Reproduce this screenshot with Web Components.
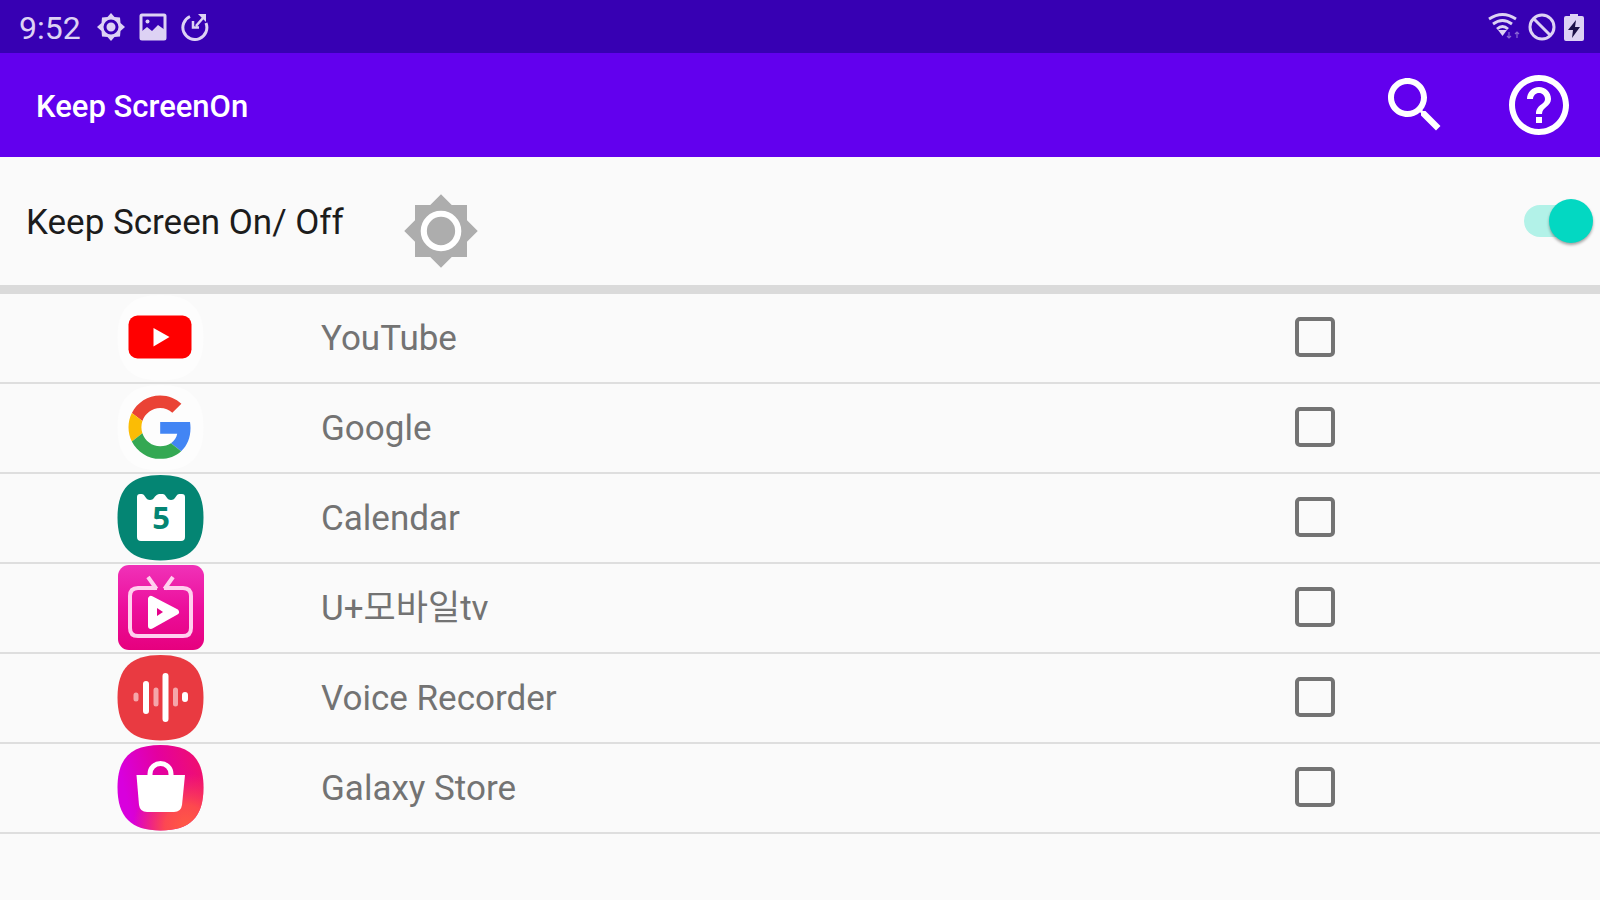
<!DOCTYPE html>
<html lang="en">
<head>
<meta charset="utf-8">
<meta name="viewport" content="width=device-width, initial-scale=1">
<title>Keep ScreenOn</title>
<style>
  body {
    margin: 0;
    min-height: 100vh;
    background: #fafafa;
    font-family: Roboto, 'Noto Sans CJK KR', sans-serif;
  }
</style>
</head>
<body>
<keep-screen-app></keep-screen-app>

<script>
// ============ APP ICONS (88 x 88) ============

const SQUIRCLE = 'M44.500 1C74 1 87.500 14 87.500 43.500S74 86.500 44.500 86.500 1.500 73 1.500 43.500 15 1 44.500 1z';

const APP_ICONS = {
  youtube: `
    <path d="${SQUIRCLE}" fill="#fdfdfd"/>
    <rect x="12.500" y="21.500" width="63" height="43" rx="9" fill="#f00"/>
    <path d="M37.500 34l16 9-16 9.500z" fill="#fff"/>`,
  google: `
    <path d="${SQUIRCLE}" fill="#fdfdfd"/>
    <g transform="translate(12.500 11.500) scale(1.320)">
      <path fill="#ea4335" d="M24 9.500c3.540 0 6.710 1.220 9.210 3.600l6.850-6.850C35.900 2.380 30.470 0 24 0 14.620 0 6.510 5.380 2.560 13.220l7.980 6.190C12.430 13.720 17.740 9.500 24 9.500z"/>
      <path fill="#4285f4" d="M46.980 24.550c0-1.570-.15-3.090-.38-4.550H24v9.020h12.940c-.58 2.960-2.260 5.480-4.780 7.180l7.730 6c4.510-4.180 7.090-10.360 7.090-17.650z"/>
      <path fill="#fbbc05" d="M10.530 28.590c-.48-1.450-.76-2.990-.76-4.590s.27-3.140.76-4.590l-7.980-6.190C.92 16.460 0 20.120 0 24c0 3.880.92 7.540 2.560 10.780l7.970-6.190z"/>
      <path fill="#34a853" d="M24 48c6.480 0 11.930-2.130 15.890-5.810l-7.730-6c-2.150 1.450-4.920 2.300-8.160 2.300-6.260 0-11.570-4.220-13.470-9.910l-7.980 6.190C6.510 42.620 14.620 48 24 48z"/>
    </g>`,
  calendar: `
    <path d="${SQUIRCLE}" fill="#048573"/>
    <path d="M21 23q0-3 3-3h2q2 0 3 2.500Q31 26 34 26t5-3.500Q41 20 43 20h4q2 0 3 2.500Q52 26 55 26t5-3.500Q61 20 63 20h3q3 0 3 3v40q0 4-4 4H25q-4 0-4-4z" fill="#fff"/>
    <text x="45" y="55" text-anchor="middle" font-family="Open Sans, sans-serif" font-size="31" font-weight="700" fill="#048573">5</text>`,
  tv: `
    <defs><linearGradient id="tv" x1="0" y1="0" x2="0" y2="1">
      <stop offset="0" stop-color="#f032b8"/><stop offset=".5" stop-color="#ec0f9c"/><stop offset="1" stop-color="#e6007e"/>
    </linearGradient></defs>
    <rect x="2" y="1" width="86" height="85" rx="11" fill="url(#tv)"/>
    <g fill="none" stroke="#ffd0ee" stroke-width="4">
      <path d="M41 24H22q-8 0-8 8v32q0 8 8 8h45q8 0 8-8V32q0-8-8-8H48"/>
      <path d="M32 13l8.500 12M57 13l-8.500 12"/>
    </g>
    <path d="M35 35v27l25-14z" fill="#fff" stroke="#fff" stroke-width="6" stroke-linejoin="round"/>
    <path d="M41 44v8l6-4z" fill="#e5008a"/>`,
  recorder: `
    <path d="${SQUIRCLE}" fill="#e93a41"/>
    <g stroke="#fff" stroke-width="6" stroke-linecap="round">
      <path d="M30 30v27M49.500 22v43M69 41v4"/>
      <path d="M20 41v4M40 36v14M59.500 36v14" stroke-width="5" opacity=".55"/>
    </g>`,
  store: `
    <defs>
      <linearGradient id="base" x1="0" y1=".4" x2="1" y2=".2">
        <stop offset=".05" stop-color="#d800dd"/><stop offset=".5" stop-color="#e4009f"/><stop offset="1" stop-color="#f0106c"/>
      </linearGradient>
      <radialGradient id="warm" cx=".8" cy=".95" r=".62">
        <stop offset="0" stop-color="#ff5a45"/><stop offset=".4" stop-color="#ff5048" stop-opacity=".9"/><stop offset="1" stop-color="#ff4050" stop-opacity="0"/>
      </radialGradient>
    </defs>
    <path d="${SQUIRCLE}" fill="url(#base)"/>
    <path d="${SQUIRCLE}" fill="url(#warm)"/>
    <path d="M34 33v-3a10.500 10.500 0 0 1 21 0v3" fill="none" stroke="#fff" stroke-width="5"/>
    <path d="M20.500 31H69l-3 30q-1 7-8 7H31q-7 0-8-7z" fill="#fff"/>`
};

const APPS = [
  { name: 'YouTube', icon: 'youtube' },
  { name: 'Google', icon: 'google' },
  { name: 'Calendar', icon: 'calendar' },
  { name: 'U+모바일tv', icon: 'tv' },
  { name: 'Voice Recorder', icon: 'recorder' },
  { name: 'Galaxy Store', icon: 'store' }
];

const SUN_PATH = 'M20 8.690V4h-4.690L12 .69 8.690 4H4v4.690L.69 12 4 15.310V20h4.690L12 23.310 15.310 20H20v-4.690L23.310 12 20 8.690z';

// ============ STATUS BAR ============

const templateStatus = document.createElement('template');
templateStatus.innerHTML = `
<style>
  :host {
    display: flex;
    align-items: center;
    justify-content: space-between;
    height: 53px;
    padding: 0 16px 0 19px;
    background: #3700b3;
    color: #ddd2f4;
    font-size: 32px;
  }
  .group { display: flex; align-items: center; gap: 14px; }
  .time { margin: 2px 2px 0 0; }
  .system { gap: 6px; }
  svg { display: block; width: 28px; height: 28px; }
  .system .wifi { width: 34px; }
  .system .battery { width: 20px; margin-left: 2px; }
</style>
<div class="group">
  <span class="time"><slot></slot></span>
  <svg viewBox="0 0 28 28">
    <path d="M14 0l3.500 4L23 4.500 23.500 10 28 14l-4.500 4-.5 5.500-5.500.5L14 28l-3.500-4-5.500-.5L4.500 18 0 14l4.500-4L5 4.500 10.500 4z" fill="currentColor"/>
    <circle cx="14" cy="14" r="6" fill="none" stroke="#3700b3" stroke-width="3"/>
  </svg>
  <svg viewBox="0 0 28 28">
    <rect x="2" y="2" width="24" height="24" rx="1" fill="none" stroke="currentColor" stroke-width="3"/>
    <path d="M2 19l6-5 5 4 6-6 7 5v9H2z" fill="currentColor"/>
    <circle cx="8.500" cy="8.500" r="2" fill="currentColor"/>
  </svg>
  <svg viewBox="0 0 28 28" fill="none" stroke="currentColor" stroke-width="3">
    <path d="M9 3.500A12 12 0 1 0 25 10"/>
    <path d="M12 8v6.500h6M15 13l7-8" stroke-width="2.500"/>
    <path d="M17 1h8v8z" fill="currentColor" stroke="none"/>
  </svg>
</div>
<div class="group system">
  <svg class="wifi" viewBox="0 0 34 28" fill="none" stroke="currentColor" stroke-width="2.800">
    <path d="M1 6Q14.500-3 28 6M5 11q9.500-7 19 0M9 16q5.500-5 11 0"/>
    <path d="M10 17h9l-4.500 6z" fill="currentColor" stroke="none"/>
    <path d="M21 19v6m-2-2l2 2 2-2M29 25v-6m-2 2l2-2 2 2" stroke-width="1.200" opacity=".5"/>
  </svg>
  <svg viewBox="0 0 28 28" fill="none" stroke="currentColor" stroke-width="3">
    <circle cx="14" cy="14" r="12"/>
    <path d="M5 5l18 18"/>
  </svg>
  <svg class="battery" viewBox="0 0 20 28">
    <path d="M6 1h8v2h4q2 0 2 2v21q0 2-2 2H2q-2 0-2-2V5q0-2 2-2h4z" fill="currentColor"/>
    <path d="M12 7L4 17h5l-1 8 8-11h-5z" fill="#1c1048"/>
  </svg>
</div>
`;

class StatusBar extends HTMLElement {
  constructor() {
    super();
    this.attachShadow({ mode: 'open' });
    this.shadowRoot.appendChild(templateStatus.content.cloneNode(true));
  }
}

// ============ APP BAR ============

const templateAppBar = document.createElement('template');
templateAppBar.innerHTML = `
<style>
  :host {
    display: flex;
    align-items: center;
    height: 104px;
    padding: 0 25px 0 36px;
    gap: 52px;
    background: #6200ee;
    color: #fff;
  }
  h1 {
    flex: 1;
    margin: 2px 0 0;
    font-size: 31px;
    font-weight: 500;
  }
  button {
    padding: 0;
    border: 0;
    background: none;
    color: inherit;
    cursor: pointer;
  }
  svg { display: block; width: 72px; height: 72px; fill: currentColor; }
</style>
<h1><slot></slot></h1>
<button type="button" aria-label="Search">
  <svg viewBox="0 0 24 24"><path d="M15.500 14h-.79l-.28-.27C15.410 12.590 16 11.110 16 9.500 16 5.910 13.090 3 9.500 3S3 5.910 3 9.500 5.910 16 9.500 16c1.610 0 3.090-.59 4.230-1.570l.27.28v.79l5 4.990L20.490 19l-4.990-5zm-6 0C7.010 14 5 11.990 5 9.500S7.010 5 9.500 5 14 7.010 14 9.500 11.990 14 9.500 14z"/></svg>
</button>
<button type="button" aria-label="Help">
  <svg viewBox="0 0 24 24"><path d="M11 18h2v-2h-2v2zm1-16C6.480 2 2 6.480 2 12s4.480 10 10 10 10-4.480 10-10S17.520 2 12 2zm0 18c-4.410 0-8-3.590-8-8s3.590-8 8-8 8 3.590 8 8-3.590 8-8 8zm0-14c-2.210 0-4 1.790-4 4h2c0-1.100.9-2 2-2s2 .9 2 2c0 2-3 1.750-3 5h2c0-2.250 3-2.500 3-5 0-2.210-1.790-4-4-4z"/></svg>
</button>
`;

class AppBar extends HTMLElement {
  constructor() {
    super();
    this.attachShadow({ mode: 'open' });
    this.shadowRoot.appendChild(templateAppBar.content.cloneNode(true));
  }
}

// ============ MAIN SWITCH ============

const templateSwitch = document.createElement('template');
templateSwitch.innerHTML = `
<style>
  :host {
    display: flex;
    align-items: center;
    height: 128px;
    padding: 0 7px 0 26px;
    border-bottom: 9px solid #dadada;
    color: #1c1c1c;
    font-size: 35px;
  }
  label { padding-top: 2px; }
  svg {
    align-self: flex-end;
    width: 78px;
    height: 78px;
    margin: 0 auto 15px 58px;
  }
  input {
    appearance: none;
    display: grid;
    align-items: center;
    width: 69px;
    height: 44px;
    margin: 0;
    cursor: pointer;
  }
  input::before,
  input::after {
    content: '';
    grid-area: 1 / 1;
  }
  input::before {
    width: 62px;
    height: 32px;
    border-radius: 16px;
    background: #c4c4c4;
  }
  input::after {
    width: 44px;
    height: 44px;
    border-radius: 50%;
    background: #f1f1f1;
    box-shadow: 0 2px 3px rgba(0, 0, 0, .35);
  }
  input:checked::before { background: #b2f2e8; }
  input:checked::after { justify-self: end; background: #03d8c2; }
</style>
<label for="toggle"><slot></slot></label>
<svg viewBox="0 0 24 24">
  <path d="${SUN_PATH}" fill="#adadad"/>
  <circle cx="12" cy="12" r="5.300" fill="none" stroke="#fff" stroke-width="1.900"/>
</svg>
<input type="checkbox" role="switch" id="toggle" checked>
`;

class ScreenSwitch extends HTMLElement {
  constructor() {
    super();
    this.attachShadow({ mode: 'open' });
    this.shadowRoot.appendChild(templateSwitch.content.cloneNode(true));
  }
}

// ============ APP ROW ============

const templateRow = document.createElement('template');
templateRow.innerHTML = `
<style>
  :host {
    display: block;
    border-bottom: 2px solid #dedede;
    color: #737373;
    font-size: 35px;
  }
  label {
    display: grid;
    grid-template-columns: 2fr 6fr 2fr;
    align-items: center;
    height: 88px;
  }
  .icon { justify-self: center; }
  .icon svg { display: block; width: 88px; height: 88px; }
  .name { padding: 2px 0 0 1px; line-height: 40px; }
  input {
    appearance: none;
    box-sizing: border-box;
    width: 40px;
    height: 40px;
    margin: 0 15px 2px;
    border: 4px solid #737373;
    border-radius: 5px;
    cursor: pointer;
  }
  input:checked { background: #03d8c2; border-color: #03d8c2; }
</style>
<label>
  <span class="icon"></span>
  <span class="name"><slot></slot></span>
  <input type="checkbox">
</label>
`;

class AppRow extends HTMLElement {
  static get observedAttributes() {
    return ['icon'];
  }

  constructor() {
    super();
    this.attachShadow({ mode: 'open' });
    this.shadowRoot.appendChild(templateRow.content.cloneNode(true));
    this._icon = this.shadowRoot.querySelector('.icon');
  }

  attributeChangedCallback(name, oldValue, newValue) {
    this._icon.innerHTML = `<svg viewBox="0 0 88 88" aria-hidden="true">${APP_ICONS[newValue] || ''}</svg>`;
  }
}

// ============ APP ============

class KeepScreenApp extends HTMLElement {
  constructor() {
    super();
    this.attachShadow({ mode: 'open' });
    this.shadowRoot.innerHTML = `
      <style>
        :host { display: block; }
      </style>
      <status-bar>9:52</status-bar>
      <app-bar>Keep ScreenOn</app-bar>
      <main>
        <screen-switch>Keep Screen On/ Off</screen-switch>
        ${APPS.map(app => `<app-row icon="${app.icon}">${app.name}</app-row>`).join('')}
      </main>
    `;
  }
}

customElements.define('status-bar', StatusBar);
customElements.define('app-bar', AppBar);
customElements.define('screen-switch', ScreenSwitch);
customElements.define('app-row', AppRow);
customElements.define('keep-screen-app', KeepScreenApp);
</script>
</body>
</html>
